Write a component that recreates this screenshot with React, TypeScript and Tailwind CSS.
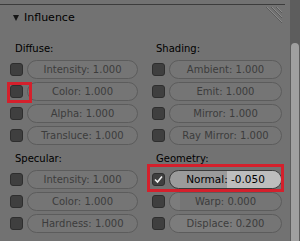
import React from "react";

type Field = { on?: boolean; label: string; value: string; active?: boolean; fill?: number };

const font = { fontFamily: '"DejaVu Sans", "Liberation Sans", sans-serif' };

function Check({ on }: { on?: boolean }) {
  return (
    <div className="w-[13px] h-[13px] shrink-0 rounded-[3px] border border-[#2e2e2e] bg-[#3f3f3f] flex items-center justify-center">
      {on && (
        <svg width="11" height="11" viewBox="0 0 11 11">
          <path d="M2 5.5 L4.5 8 L9 2.5" stroke="#f0f0f0" strokeWidth="1.6" fill="none" />
        </svg>
      )}
    </div>
  );
}

function Row({ f }: { f: Field }) {
  return (
    <div className="flex items-center h-[19px] gap-[4px]">
      <Check on={f.on} />
      {f.active ? (
        <div className="relative flex-1 h-[19px] rounded-full border border-[#3a3a3a] bg-[#9b9b9b] overflow-hidden flex items-center justify-center text-[10.5px] text-black">
          <div className="absolute right-0 top-0 bottom-0 w-[54px] bg-[#bdbdbd]" />
          <span className="relative">
            {f.label}: {f.value}
          </span>
        </div>
      ) : (
        <div className="relative flex-1 h-[19px] rounded-full border border-[#5c5c5c] bg-[#757575] overflow-hidden flex items-center justify-center text-[10px] text-[#3c3c3c]">
          {f.fill !== undefined && (
            <div className="absolute left-0 top-0 bottom-0 bg-[#7c7c7c]" style={{ width: f.fill }} />
          )}
          <span className="relative">
            {f.label}: {f.value}
          </span>
        </div>
      )}
    </div>
  );
}

function Section({ title, rows, indent }: { title: string; rows: Field[]; indent: string }) {
  return (
    <div className="flex flex-col">
      <div className={`h-[13px] leading-[13px] text-[10px] text-black ${indent}`}>{title}</div>
      <div className="flex flex-col gap-[3px] mt-[5px]">
        {rows.map((r) => (
          <Row key={r.label} f={r} />
        ))}
      </div>
    </div>
  );
}

export default function App() {
  return (
    <div className="relative w-[300px] h-[241px] bg-[#727272] flex overflow-hidden" style={font}>
      <div className="w-[290px] flex flex-col">
        <div className="h-[4px]" />
        <div className="h-px w-[285px] bg-[#3c3c3c]" />
        <div className="relative h-[13px] mt-[6px] flex items-center pl-[13px]">
          <svg width="6" height="6" viewBox="0 0 6 6" className="mr-[5px]">
            <path d="M0 0 H6 L3 6 Z" fill="#161616" />
          </svg>
          <span className="text-[11px] leading-[13px] text-black">Influence</span>
          <svg width="20" height="20" viewBox="0 0 20 20" className="absolute left-[264px] top-[-5px]">
            <path d="M2 1 L18 17 M7 1 L18 12 M12 1 L18 7" stroke="#5a5a5a" strokeWidth="1" />
            <path d="M3 1 L18 16 M8 1 L18 11 M13 1 L18 6" stroke="#8a8a8a" strokeWidth="1" />
          </svg>
        </div>
        <div className="grid grid-cols-[128px_130px] gap-x-[14px] gap-y-[7px] pl-[10px] mt-[18px]">
          <Section
            title="Diffuse:"
            indent="pl-[5px]"
            rows={[
              { label: "Intensity", value: "1.000" },
              { label: "Color", value: "1.000" },
              { label: "Alpha", value: "1.000" },
              { label: "Transluce", value: "1.000" },
            ]}
          />
          <Section
            title="Shading:"
            indent="pl-[4px]"
            rows={[
              { label: "Ambient", value: "1.000" },
              { label: "Emit", value: "1.000" },
              { label: "Mirror", value: "1.000" },
              { label: "Ray Mirror", value: "1.000" },
            ]}
          />
          <Section
            title="Specular:"
            indent="pl-[5px]"
            rows={[
              { label: "Intensity", value: "1.000" },
              { label: "Color", value: "1.000" },
              { label: "Hardness", value: "1.000" },
            ]}
          />
          <Section
            title="Geometry:"
            indent="pl-[4px]"
            rows={[
              { on: true, active: true, label: "Normal", value: "-0.050" },
              { label: "Warp", value: "0.000", fill: 10 },
              { label: "Displace", value: "0.200", fill: 70 },
            ]}
          />
        </div>
      </div>
      <div className="w-[10px] bg-[#5d5d5d] flex flex-col">
        <div className="h-[43px]" />
        <div className="flex-1 mx-[1px] rounded-t-[4px] bg-[#a0a0a0]" />
      </div>

      <div className="absolute left-[7px] top-[82px] w-[25px] h-[21px] border-[3px] border-[#d4202c]" />
      <div className="absolute left-[147px] top-[164px] w-[137px] h-[28px] border-[3px] border-[#d4202c]" />
    </div>
  );
}
